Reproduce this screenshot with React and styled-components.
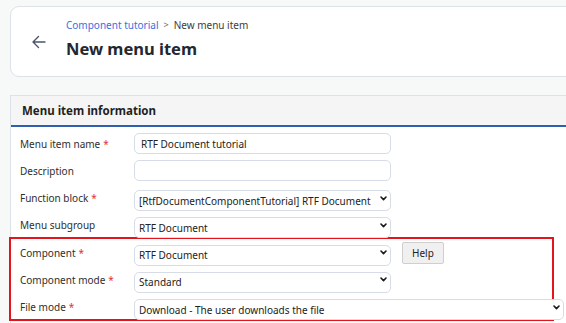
import React from 'react';
import styled, { createGlobalStyle } from 'styled-components';

const GlobalStyle = createGlobalStyle`
  html, body {
    margin: 0;
    padding: 0;
    background: #f7f8f8;
  }
  body {
    font-family: "Noto Sans", "Open Sans", sans-serif;
    color: #2b2b2b;
  }
`;

const Page = styled.div`
  width: 566px;
  height: 323px;
  overflow: hidden;
  padding: 6px 0 0 10px;
  box-sizing: border-box;
`;

const HeaderCard = styled.div`
  width: 600px;
  height: 71px;
  box-sizing: border-box;
  background: #ffffff;
  border: 1px solid #dde1e8;
  border-radius: 9px;
  display: flex;
  align-items: center;
  gap: 19px;
  padding: 0 0 0 20px;
`;

const BackButton = styled.button`
  background: transparent;
  border: none;
  padding: 0;
  margin-top: 1px;
  width: 16px;
  height: 16px;
  display: flex;
  align-items: center;
  justify-content: center;
  cursor: pointer;
`;

const TitleBlock = styled.div`
  display: flex;
  flex-direction: column;
  gap: 6px;
  margin-top: -6px;
`;

const Breadcrumb = styled.div`
  display: flex;
  align-items: center;
  gap: 5px;
  font-size: 10px;
  line-height: 14px;
  color: #3d3d3d;
`;

const Crumb = styled.a`
  color: #3a6fe0;
  text-decoration: none;
`;

const Sep = styled.span`
  color: #666;
  font-size: 9px;
`;

const Title = styled.h1`
  margin: 0;
  font-size: 16.5px;
  line-height: 22px;
  font-weight: 700;
  color: #222831;
`;

const Panel = styled.div`
  margin-top: 18px;
  width: 600px;
  background: #ffffff;
  border: 1px solid #dde1e8;
  border-bottom: none;
  height: 300px;
`;

const PanelHeader = styled.div`
  height: 29px;
  background: #f5f5f5;
  border-bottom: 2px solid #2f5fae;
  display: flex;
  align-items: center;
  padding-left: 11px;
  font-size: 11.5px;
  font-weight: 700;
  color: #1f1f1f;
`;

const FormBody = styled.div`
  display: flex;
  flex-direction: column;
  gap: 6.3px;
  padding: 6px 0 0 9px;
`;

const Highlight = styled.div`
  display: flex;
  flex-direction: column;
  gap: 6.3px;
  width: 545px;
  box-sizing: border-box;
  margin: -5px 0 0 -11px;
  padding: 3px 0 1.5px 9px;
  border: 2px solid #e3141b;
`;

const Row = styled.div`
  display: flex;
  align-items: center;
  height: 21px;
  gap: 11px;
`;

const Label = styled.label`
  width: 103px;
  flex-shrink: 0;
  font-size: 10px;
  color: #2e2e2e;
  white-space: nowrap;
`;

const Req = styled.span`
  color: #e0303a;
  margin-left: 3px;
`;

const TextInput = styled.input`
  box-sizing: border-box;
  width: 257px;
  height: 21px;
  border: 1px solid #d7dde7;
  border-radius: 5px;
  padding: 0 6px;
  font-family: inherit;
  font-size: 10px;
  color: #222;
  background: #fff;
  outline: none;
`;

const SelectWrap = styled.div`
  position: relative;
  width: ${p => p.$width || 257}px;
  height: 21px;
  flex-shrink: 0;
`;

const Select = styled.select`
  appearance: none;
  box-sizing: border-box;
  width: 100%;
  height: 21px;
  border: 1px solid #d7dde7;
  border-radius: 5px;
  padding: 0 16px 0 4px;
  font-family: inherit;
  font-size: 10px;
  color: #222;
  background: #fff;
  outline: none;
`;

const Chevron = styled.svg`
  position: absolute;
  right: 4px;
  top: 8px;
  pointer-events: none;
`;

const HelpButton = styled.button`
  height: 22px;
  padding: 0 9px;
  background: #f0f0f0;
  border: 1px solid #cfcfcf;
  border-radius: 2px;
  font-family: inherit;
  font-size: 10px;
  color: #222;
  cursor: pointer;
`;

const SelectField = ({ value, width }) => (
  <SelectWrap $width={width}>
    <Select defaultValue={value}>
      <option>{value}</option>
    </Select>
    <Chevron width="7" height="5" viewBox="0 0 7 5">
      <path d="M1 1 L3.5 3.6 L6 1" fill="none" stroke="#1a1a1a" strokeWidth="1.6" strokeLinecap="round" strokeLinejoin="round" />
    </Chevron>
  </SelectWrap>
);

const App = () => (
  <>
    <GlobalStyle />
    <Page>
      <HeaderCard>
        <BackButton aria-label="Back">
          <svg width="16" height="16" viewBox="0 0 16 16">
            <path d="M14 8 H2 M7.5 2.5 L2 8 L7.5 13.5" fill="none" stroke="#4a5568" strokeWidth="1.4" strokeLinecap="round" strokeLinejoin="round" />
          </svg>
        </BackButton>
        <TitleBlock>
          <Breadcrumb>
            <Crumb href="#">Component tutorial</Crumb>
            <Sep>&gt;</Sep>
            <span>New menu item</span>
          </Breadcrumb>
          <Title>New menu item</Title>
        </TitleBlock>
      </HeaderCard>

      <Panel>
        <PanelHeader>Menu item information</PanelHeader>
        <FormBody>
          <Row>
            <Label>Menu item name<Req>*</Req></Label>
            <TextInput defaultValue="RTF Document tutorial" />
          </Row>
          <Row>
            <Label>Description</Label>
            <TextInput defaultValue="" />
          </Row>
          <Row>
            <Label>Function block<Req>*</Req></Label>
            <SelectField value="[RtfDocumentComponentTutorial] RTF Document" />
          </Row>
          <Row>
            <Label>Menu subgroup</Label>
            <SelectField value="RTF Document" />
          </Row>
          <Highlight>
            <Row>
              <Label>Component<Req>*</Req></Label>
              <SelectField value="RTF Document" />
              <HelpButton>Help</HelpButton>
            </Row>
            <Row>
              <Label>Component mode<Req>*</Req></Label>
              <SelectField value="Standard" />
            </Row>
            <Row>
              <Label>File mode<Req>*</Req></Label>
              <SelectField value="Download - The user downloads the file" width={430} />
            </Row>
          </Highlight>
        </FormBody>
      </Panel>
    </Page>
  </>
);

export default App;
